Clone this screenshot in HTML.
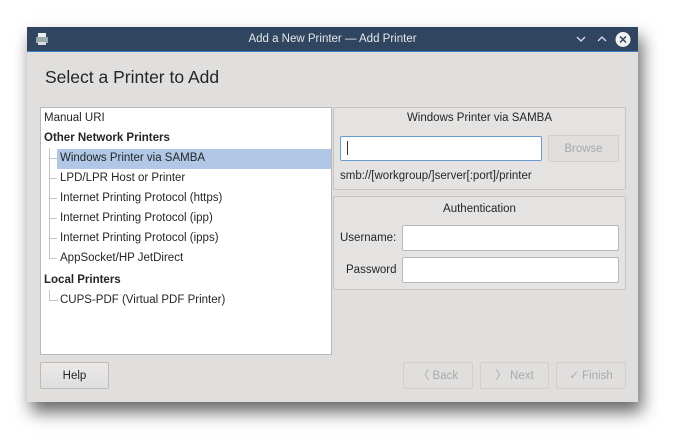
<!DOCTYPE html>
<html><head><style>
body{margin:0;width:680px;height:444px;background:#fff;position:relative;overflow:hidden;font-family:"Liberation Sans","DejaVu Sans",sans-serif;font-size:11.5px;color:#232627}
.a{position:absolute}
.win{left:27px;top:27px;width:611px;height:375px;background:#e0dfde;box-shadow:4px 10px 16px rgba(0,0,0,.6)}
.tb{left:27px;top:27px;width:611px;height:24px;background:#2f4560;border-bottom:1px solid #3d7ec0;color:#e6e8ea;text-align:center;line-height:24px;font-size:11.5px}
.box{background:#fff;border:1px solid #b8b7b6}
.grp{border:1px solid #c6c5c4;background:#e4e3e2;border-radius:2px}
.btn{border:1px solid #bcbbba;border-radius:2px;background:linear-gradient(#ebeae9,#dfdedd);text-align:center;line-height:26px;box-sizing:border-box}
.dis{color:#a9a9a9;border-color:#d0cfce;background:#e0dfde}
.row{position:absolute;left:0;height:20px;line-height:21px;white-space:nowrap}
.ln{position:absolute;border-color:#c4c4c4;border-style:solid;border-width:0}
</style></head><body>
<div class="a win"></div>
<div class="a tb">Add a New Printer — Add Printer</div>
<svg class="a" style="left:35px;top:32px" width="14" height="14"><rect x="3" y="1" width="8" height="4" fill="#eee"/><rect x="1" y="5" width="12" height="6" fill="#9aa"/><rect x="3" y="10" width="8" height="3" fill="#ddd"/></svg>
<svg class="a" style="left:574px;top:31px" width="60" height="17"><path d="M3 6l4 4 4-4M24 10l4-4 4 4" stroke="#dde" stroke-width="1.3" fill="none"/><circle cx="49" cy="8.5" r="7.5" fill="#f2f2f2"/><path d="M46 5.5l6 6M52 5.5l-6 6" stroke="#2f4560" stroke-width="1.5"/></svg>
<div class="a" style="left:45px;top:67px;font-size:17.5px">Select a Printer to Add</div>
<div class="a box" style="left:40px;top:107px;width:290px;height:246px">
 <div class="row" style="top:0;left:3px">Manual URI</div>
 <div class="row" style="top:20px;left:3px;font-weight:bold">Other Network Printers</div>
 <div class="a" style="left:16px;top:41px;width:274px;height:20px;background:#b0c8e6"></div>
 <div class="ln" style="left:8px;top:40px;height:111px;border-left-width:1px"></div>
 <div class="ln" style="left:8px;top:50px;width:8px;border-top-width:1px"></div>
 <div class="ln" style="left:8px;top:70px;width:8px;border-top-width:1px"></div>
 <div class="ln" style="left:8px;top:90px;width:8px;border-top-width:1px"></div>
 <div class="ln" style="left:8px;top:110px;width:8px;border-top-width:1px"></div>
 <div class="ln" style="left:8px;top:130px;width:8px;border-top-width:1px"></div>
 <div class="ln" style="left:8px;top:150px;width:8px;border-top-width:1px"></div>
 <div class="row" style="top:40px;left:19px">Windows Printer via SAMBA</div>
 <div class="row" style="top:60px;left:19px">LPD/LPR Host or Printer</div>
 <div class="row" style="top:80px;left:19px">Internet Printing Protocol (https)</div>
 <div class="row" style="top:100px;left:19px">Internet Printing Protocol (ipp)</div>
 <div class="row" style="top:120px;left:19px">Internet Printing Protocol (ipps)</div>
 <div class="row" style="top:140px;left:19px">AppSocket/HP JetDirect</div>
 <div class="row" style="top:162px;left:3px;font-weight:bold">Local Printers</div>
 <div class="ln" style="left:8px;top:182px;height:10px;border-left-width:1px;width:8px;border-bottom-width:1px"></div>
 <div class="row" style="top:182px;left:19px">CUPS-PDF (Virtual PDF Printer)</div>
</div>
<div class="a grp" style="left:333px;top:107px;width:291px;height:81px"></div>
<div class="a" style="left:333px;top:112px;width:293px;text-align:center">Windows Printer via SAMBA</div>
<div class="a box" style="left:340px;top:136px;width:200px;height:23px;border-color:#6a9bd3;border-radius:2px"></div>
<div class="a" style="left:347px;top:141px;width:1px;height:14px;background:#333"></div>
<div class="a btn dis" style="left:548px;top:135px;width:71px;height:27px">Browse</div>
<div class="a" style="left:340px;top:170px">smb://[workgroup/]server[:port]/printer</div>
<div class="a grp" style="left:333px;top:196px;width:291px;height:92px"></div>
<div class="a" style="left:333px;top:203px;width:293px;text-align:center">Authentication</div>
<div class="a" style="left:340px;top:232px">Username:</div>
<div class="a box" style="left:402px;top:225px;width:215px;height:24px;border-radius:2px"></div>
<div class="a" style="left:346px;top:264px">Password</div>
<div class="a box" style="left:402px;top:257px;width:215px;height:24px;border-radius:2px"></div>
<div class="a btn" style="left:40px;top:362px;width:69px;height:27px">Help</div>
<div class="a btn dis" style="left:403px;top:362px;width:70px;height:27px">〈 Back</div>
<div class="a btn dis" style="left:480px;top:362px;width:69px;height:27px">〉 Next</div>
<div class="a btn dis" style="left:556px;top:362px;width:70px;height:27px">✓ Finish</div>
</body></html>
